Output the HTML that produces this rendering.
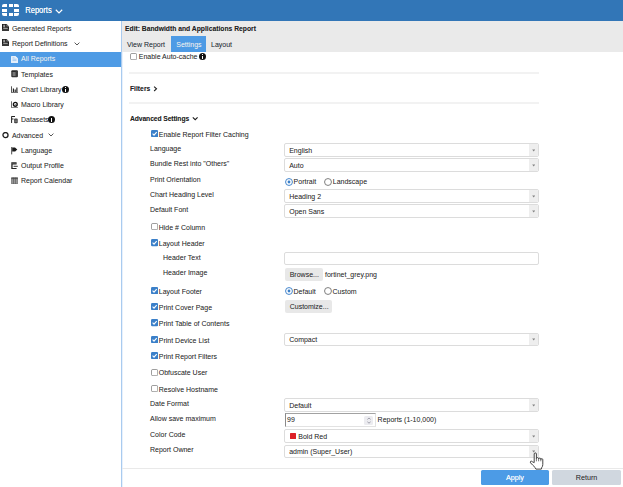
<!DOCTYPE html>
<html><head><meta charset="utf-8"><style>
html,body{margin:0;padding:0;width:623px;height:487px;overflow:hidden;background:#fff}
body{position:relative;font-family:"Liberation Sans",sans-serif}
.t{position:absolute;white-space:nowrap;line-height:10px;text-shadow:0 0 0.35px rgba(0,0,0,0.22)}
.b{position:absolute;box-sizing:border-box}
</style></head><body>
<div class="b" style="left:0px;top:0px;width:623px;height:21px;background:#3276b7"></div>
<div class="b" style="left:2.3px;top:3.9px;width:4.7px;height:3.1px;background:#fff;border-top-left-radius:2px"></div>
<div class="b" style="left:8.6px;top:3.9px;width:4.1px;height:3.1px;background:#fff;"></div>
<div class="b" style="left:14px;top:3.9px;width:5.1px;height:3.1px;background:#fff;border-top-right-radius:2px"></div>
<div class="b" style="left:2.3px;top:8.6px;width:4.7px;height:3.3px;background:#fff;"></div>
<div class="b" style="left:14px;top:8.6px;width:5.1px;height:3.3px;background:#fff;"></div>
<div class="b" style="left:2.3px;top:13.15px;width:4.7px;height:3.25px;background:#fff;border-bottom-left-radius:2px"></div>
<div class="b" style="left:8.6px;top:13.15px;width:4.1px;height:3.25px;background:#fff;"></div>
<div class="b" style="left:14px;top:13.15px;width:5.1px;height:3.25px;background:#fff;border-bottom-right-radius:2px"></div>
<div class="t" style="left:25.2px;top:5.67px;font-size:7.6px;font-weight:400;color:#fff;transform-origin:0 7.63px;transform:scaleY(1.1);text-shadow:0 0 0.4px rgba(255,255,255,0.8)">Reports</div>
<svg class="b" style="left:54.5px;top:8.5px" width="8" height="5" viewBox="0 0 8 5"><path d="M0.8 0.8 L4 3.9 L7.2 0.8" fill="none" stroke="#fff" stroke-width="1.2"/></svg>
<div class="b" style="left:121px;top:21px;width:1px;height:466px;background:#a9cbef"></div>
<div class="b" style="left:122px;top:52px;width:1px;height:435px;background:#e8f1fc"></div>
<div class="b" style="left:0px;top:51.5px;width:121px;height:15px;background:#4e9be5"></div>
<div class="t" style="left:11.9px;top:24.07px;font-size:7.0px;font-weight:400;color:#333;transform-origin:0 7.43px;transform:scaleY(1.1);">Generated Reports</div>
<svg class="b" style="left:2px;top:24.30px" width="7" height="7.2" viewBox="0 0 7 7.2"><path d="M0 0 H4.6 L7 2.4 V7.2 H0 Z" fill="#1e1e1e"/><path d="M4.4 0.2 V2.6 H6.8" fill="#888"/><path d="M1.2 1.3 H3.2 M1.2 2.7 H3.2 M1.2 4.3 H5.8" stroke="#fff" stroke-width="0.7"/><path d="M0 6 H7" stroke="#555" stroke-width="1"/></svg>
<div class="t" style="left:11.9px;top:39.07px;font-size:7.0px;font-weight:400;color:#333;transform-origin:0 7.43px;transform:scaleY(1.1);">Report Definitions</div>
<svg class="b" style="left:2px;top:39.30px" width="7" height="7.2" viewBox="0 0 7 7.2"><path d="M0 0 H4.6 L7 2.4 V7.2 H0 Z" fill="#1e1e1e"/><path d="M4.4 0.2 V2.6 H6.8" fill="#888"/><path d="M1.2 1.3 H3.2 M1.2 2.7 H3.2 M1.2 4.3 H5.8" stroke="#fff" stroke-width="0.7"/><path d="M0 6 H7" stroke="#555" stroke-width="1"/></svg>
<div class="t" style="left:21px;top:54.07px;font-size:7.0px;font-weight:400;color:#fff;transform-origin:0 7.43px;transform:scaleY(1.1);">All Reports</div>
<svg class="b" style="left:11px;top:55.80px" width="7.2" height="7.2" viewBox="0 0 7.2 7.2"><path d="M0.4 0.4 H4.6 L6.8 2.6 V6.8 H0.4 Z" fill="#e8f1fb" stroke="#fff" stroke-width="0.8"/><path d="M1.5 1.8 H3.5 M1.5 3.2 H5.5 M1.5 4.6 H5.5" stroke="#7fb3e8" stroke-width="0.6"/></svg>
<div class="t" style="left:21px;top:69.57px;font-size:7.0px;font-weight:400;color:#333;transform-origin:0 7.43px;transform:scaleY(1.1);">Templates</div>
<svg class="b" style="left:11px;top:70.30px" width="7.2" height="7.6" viewBox="0 0 7.2 7.6"><rect x="0.3" y="0.3" width="6.6" height="7" rx="1" fill="#2a2a2a"/><rect x="1.5" y="2" width="3.2" height="4.2" fill="#777"/><path d="M5.2 0.6 V6.8" stroke="#555" stroke-width="0.6"/></svg>
<div class="t" style="left:21px;top:84.57px;font-size:7.0px;font-weight:400;color:#333;transform-origin:0 7.43px;transform:scaleY(1.1);">Chart Library</div>
<svg class="b" style="left:10.8px;top:85.70px" width="7.6" height="7.2" viewBox="0 0 7.6 7.2"><path d="M0.5 0.3 V6.7 H7.4" fill="none" stroke="#444" stroke-width="0.9"/><path d="M2.4 2.4 V5.9 M4.2 3.4 V5.9 M5.9 1.6 V5.9" stroke="#1e1e1e" stroke-width="1.15"/></svg>
<div class="t" style="left:21px;top:100.07px;font-size:7.0px;font-weight:400;color:#333;transform-origin:0 7.43px;transform:scaleY(1.1);">Macro Library</div>
<svg class="b" style="left:10.8px;top:100.80px" width="7.6" height="7.2" viewBox="0 0 7.6 7.2"><path d="M0.5 0.3 V6.7 H7" fill="none" stroke="#444" stroke-width="0.8"/><circle cx="4.3" cy="3.3" r="1.9" fill="none" stroke="#111" stroke-width="1.4"/><circle cx="4.3" cy="3.3" r="0.5" fill="#444"/></svg>
<div class="t" style="left:21px;top:115.07px;font-size:7.0px;font-weight:400;color:#333;transform-origin:0 7.43px;transform:scaleY(1.1);">Datasets</div>
<svg class="b" style="left:11px;top:116.20px" width="7.2" height="7.4" viewBox="0 0 7.2 7.4"><path d="M0.6 0.5 H4 M0.6 0.3 V7 M0.6 3 H2.5" stroke="#222" stroke-width="1"/><rect x="3" y="2.6" width="3.8" height="4.6" rx="1.2" fill="#444"/><path d="M3.2 4.2 H6.6 M3.2 5.6 H6.6" stroke="#aaa" stroke-width="0.5"/></svg>
<div class="t" style="left:11.9px;top:131.07px;font-size:7.0px;font-weight:400;color:#333;transform-origin:0 7.43px;transform:scaleY(1.1);">Advanced</div>
<svg class="b" style="left:2.1px;top:132.30px" width="7.2" height="6.4" viewBox="0 0 7.2 6.4"><circle cx="3.5" cy="3.1" r="2.55" fill="none" stroke="#1e1e1e" stroke-width="1.3"/></svg>
<div class="t" style="left:21px;top:146.07px;font-size:7.0px;font-weight:400;color:#333;transform-origin:0 7.43px;transform:scaleY(1.1);">Language</div>
<svg class="b" style="left:11px;top:147.20px" width="7.2" height="7.6" viewBox="0 0 7.2 7.6"><path d="M0.7 0 V7.4" stroke="#333" stroke-width="0.9"/><path d="M1.2 0.6 H4 L6.3 2.6 L4.2 4.4 H1.2 Z" fill="#1a1a1a"/></svg>
<div class="t" style="left:21px;top:161.07px;font-size:7.0px;font-weight:400;color:#333;transform-origin:0 7.43px;transform:scaleY(1.1);">Output Profile</div>
<svg class="b" style="left:11px;top:162.10px" width="7.2" height="7.4" viewBox="0 0 7.2 7.4"><path d="M0.3 0.3 H5.6 V2.4 H1.6 V6 H5.6 V7.2 H0.3 Z" fill="#222"/><path d="M2.6 4.3 H6.8" stroke="#333" stroke-width="1"/><path d="M0.5 1.3 H5.4" stroke="#888" stroke-width="0.5"/></svg>
<div class="t" style="left:21px;top:176.07px;font-size:7.0px;font-weight:400;color:#333;transform-origin:0 7.43px;transform:scaleY(1.1);">Report Calendar</div>
<svg class="b" style="left:11px;top:177.10px" width="7.2" height="7.4" viewBox="0 0 7.2 7.4"><rect x="0.4" y="0.4" width="6.4" height="6.6" rx="0.6" fill="#9a9a9a" stroke="#555" stroke-width="0.6"/><path d="M2.5 0.6 V7 M4.6 0.6 V7" stroke="#555" stroke-width="0.6"/><path d="M0.4 1.6 H6.8" stroke="#444" stroke-width="0.8"/></svg>
<svg class="b" style="left:74px;top:41.5px" width="6" height="4" viewBox="0 0 6 4"><path d="M0.6 0.6 L3 3 L5.4 0.6" fill="none" stroke="#444" stroke-width="0.9"/></svg>
<svg class="b" style="left:47.5px;top:133px" width="6" height="4" viewBox="0 0 6 4"><path d="M0.6 0.6 L3 3 L5.4 0.6" fill="none" stroke="#444" stroke-width="0.9"/></svg>
<div class="b" style="left:61.5px;top:86.0px;width:7px;height:7px;border-radius:50%;background:#111"></div>
<div class="b" style="left:64.5px;top:87.2px;width:1px;height:1px;background:#fff"></div>
<div class="b" style="left:64.5px;top:88.8px;width:1.1px;height:3px;background:#fff"></div>
<div class="b" style="left:48.3px;top:116.3px;width:7px;height:7px;border-radius:50%;background:#111"></div>
<div class="b" style="left:51.3px;top:117.5px;width:1px;height:1px;background:#fff"></div>
<div class="b" style="left:51.3px;top:119.1px;width:1.1px;height:3px;background:#fff"></div>
<div class="b" style="left:122px;top:21px;width:501px;height:30.75px;background:#eaeaea"></div>
<div class="t" style="left:125px;top:24.16px;font-size:6.75px;font-weight:700;color:#222;transform-origin:0 7.34px;transform:scaleY(1.1);">Edit: Bandwidth and Applications Report</div>
<div class="b" style="left:170.75px;top:36px;width:35px;height:15.75px;background:#4e9be5"></div>
<div class="t" style="left:127px;top:40.07px;font-size:7.0px;font-weight:400;color:#2d3440;transform-origin:0 7.43px;transform:scaleY(1.1);">View Report</div>
<div class="t" style="left:176.25px;top:40.07px;font-size:7.0px;font-weight:400;color:#fff;transform-origin:0 7.43px;transform:scaleY(1.1);">Settings</div>
<div class="t" style="left:211px;top:40.07px;font-size:7.0px;font-weight:400;color:#2d3440;transform-origin:0 7.43px;transform:scaleY(1.1);">Layout</div>
<svg class="b" style="left:130.3px;top:52.8px" width="7.2" height="7.2" viewBox="0 0 7.2 7.2"><rect x="0.45" y="0.45" width="6.3" height="6.3" rx="1.4" fill="#fff" stroke="#858585" stroke-width="0.85"/></svg>
<div class="t" style="left:138.75px;top:52.32px;font-size:7.0px;font-weight:400;color:#333;transform-origin:0 7.43px;transform:scaleY(1.1);">Enable Auto-cache</div>
<div class="b" style="left:198.75px;top:53.2px;width:7px;height:7px;border-radius:50%;background:#111"></div>
<div class="b" style="left:201.75px;top:54.400000000000006px;width:1px;height:1px;background:#fff"></div>
<div class="b" style="left:201.75px;top:56.0px;width:1.1px;height:3px;background:#fff"></div>
<div class="b" style="left:129.2px;top:72px;width:409.8px;height:2px;background:#f2f2f2"></div>
<div class="t" style="left:130px;top:84.16px;font-size:6.75px;font-weight:700;color:#222;transform-origin:0 7.34px;transform:scaleY(1.1);">Filters</div>
<svg class="b" style="left:153px;top:85.5px" width="5" height="6" viewBox="0 0 5 6"><path d="M1.1 0.6 L3.5 2.8 L1.1 5" fill="none" stroke="#222" stroke-width="1.1"/></svg>
<div class="b" style="left:129.2px;top:102px;width:409.8px;height:2px;background:#f2f2f2"></div>
<div class="t" style="left:130px;top:114.16px;font-size:6.75px;font-weight:700;color:#222;transform-origin:0 7.34px;transform:scaleY(1.1);letter-spacing:-0.1px">Advanced Settings</div>
<svg class="b" style="left:191.5px;top:116px" width="7" height="5" viewBox="0 0 7 5"><path d="M0.8 1.4 L3.2 3.7 L5.6 1.4" fill="none" stroke="#1a1a1a" stroke-width="1.1"/></svg>
<svg class="b" style="left:150.55px;top:129.8px" width="7.2" height="7.2" viewBox="0 0 7.2 7.2"><rect x="0" y="0" width="7.2" height="7.2" rx="1.2" fill="#3b80c9"/><path d="M1.6 3.7 L3 5.1 L5.7 2.1" fill="none" stroke="#fff" stroke-width="1.1"/></svg>
<div class="t" style="left:158.75px;top:130.07px;font-size:7.0px;font-weight:400;color:#333;transform-origin:0 7.43px;transform:scaleY(1.1);">Enable Report Filter Caching</div>
<div class="t" style="left:150px;top:144.07px;font-size:7.0px;font-weight:400;color:#333;transform-origin:0 7.43px;transform:scaleY(1.1);">Language</div>
<div class="b" style="left:284px;top:143.3px;width:255px;height:13.5px;background:#fff;border:1px solid #dcdcdc;border-radius:2px"></div>
<div class="b" style="left:529.2px;top:144.3px;width:8.8px;height:11.5px;background:#eeeeee;border-top-right-radius:1.5px;border-bottom-right-radius:1.5px"></div>
<svg class="b" style="left:532px;top:148.75px" width="3.4" height="3" viewBox="0 0 3.4 3"><path d="M0.2 0.6 H3.2 L1.7 2.4 Z" fill="#808080"/></svg>
<div class="t" style="left:289.2px;top:145.87px;font-size:7.0px;font-weight:400;color:#333;transform-origin:0 7.43px;transform:scaleY(1.1);">English</div>
<div class="t" style="left:150px;top:159.07px;font-size:7.0px;font-weight:400;color:#333;transform-origin:0 7.43px;transform:scaleY(1.1);">Bundle Rest into "Others"</div>
<div class="b" style="left:284px;top:158.3px;width:255px;height:13.5px;background:#fff;border:1px solid #dcdcdc;border-radius:2px"></div>
<div class="b" style="left:529.2px;top:159.3px;width:8.8px;height:11.5px;background:#eeeeee;border-top-right-radius:1.5px;border-bottom-right-radius:1.5px"></div>
<svg class="b" style="left:532px;top:163.75px" width="3.4" height="3" viewBox="0 0 3.4 3"><path d="M0.2 0.6 H3.2 L1.7 2.4 Z" fill="#808080"/></svg>
<div class="t" style="left:289.2px;top:160.87px;font-size:7.0px;font-weight:400;color:#333;transform-origin:0 7.43px;transform:scaleY(1.1);">Auto</div>
<div class="t" style="left:150px;top:175.07px;font-size:7.0px;font-weight:400;color:#333;transform-origin:0 7.43px;transform:scaleY(1.1);">Print Orientation</div>
<svg class="b" style="left:284.75px;top:177.75px" width="8" height="8" viewBox="0 0 8 8"><circle cx="4" cy="4" r="3.45" fill="#fff" stroke="#3b80c9" stroke-width="0.95"/><circle cx="4" cy="4" r="1.4" fill="#3b80c9"/></svg>
<div class="t" style="left:293.6px;top:177.07px;font-size:7.0px;font-weight:400;color:#333;transform-origin:0 7.43px;transform:scaleY(1.1);">Portrait</div>
<svg class="b" style="left:324.25px;top:177.75px" width="8" height="8" viewBox="0 0 8 8"><circle cx="4" cy="4" r="3.45" fill="#fff" stroke="#777" stroke-width="0.95"/></svg>
<div class="t" style="left:332.8px;top:177.07px;font-size:7.0px;font-weight:400;color:#333;transform-origin:0 7.43px;transform:scaleY(1.1);">Landscape</div>
<div class="t" style="left:150px;top:190.07px;font-size:7.0px;font-weight:400;color:#333;transform-origin:0 7.43px;transform:scaleY(1.1);">Chart Heading Level</div>
<div class="b" style="left:284px;top:189.3px;width:255px;height:13.5px;background:#fff;border:1px solid #dcdcdc;border-radius:2px"></div>
<div class="b" style="left:529.2px;top:190.3px;width:8.8px;height:11.5px;background:#eeeeee;border-top-right-radius:1.5px;border-bottom-right-radius:1.5px"></div>
<svg class="b" style="left:532px;top:194.75px" width="3.4" height="3" viewBox="0 0 3.4 3"><path d="M0.2 0.6 H3.2 L1.7 2.4 Z" fill="#808080"/></svg>
<div class="t" style="left:289.2px;top:191.87px;font-size:7.0px;font-weight:400;color:#333;transform-origin:0 7.43px;transform:scaleY(1.1);">Heading 2</div>
<div class="t" style="left:150px;top:205.07px;font-size:7.0px;font-weight:400;color:#333;transform-origin:0 7.43px;transform:scaleY(1.1);">Default Font</div>
<div class="b" style="left:284px;top:204.3px;width:255px;height:13.5px;background:#fff;border:1px solid #dcdcdc;border-radius:2px"></div>
<div class="b" style="left:529.2px;top:205.3px;width:8.8px;height:11.5px;background:#eeeeee;border-top-right-radius:1.5px;border-bottom-right-radius:1.5px"></div>
<svg class="b" style="left:532px;top:209.75px" width="3.4" height="3" viewBox="0 0 3.4 3"><path d="M0.2 0.6 H3.2 L1.7 2.4 Z" fill="#808080"/></svg>
<div class="t" style="left:289.2px;top:206.87px;font-size:7.0px;font-weight:400;color:#333;transform-origin:0 7.43px;transform:scaleY(1.1);">Open Sans</div>
<svg class="b" style="left:150.8px;top:223.20000000000002px" width="7.2" height="7.2" viewBox="0 0 7.2 7.2"><rect x="0.45" y="0.45" width="6.3" height="6.3" rx="1.4" fill="#fff" stroke="#858585" stroke-width="0.85"/></svg>
<div class="t" style="left:158.75px;top:223.07px;font-size:7.0px;font-weight:400;color:#333;transform-origin:0 7.43px;transform:scaleY(1.1);">Hide # Column</div>
<svg class="b" style="left:150.8px;top:239.4px" width="7.2" height="7.2" viewBox="0 0 7.2 7.2"><rect x="0" y="0" width="7.2" height="7.2" rx="1.2" fill="#3b80c9"/><path d="M1.6 3.7 L3 5.1 L5.7 2.1" fill="none" stroke="#fff" stroke-width="1.1"/></svg>
<div class="t" style="left:158.75px;top:239.07px;font-size:7.0px;font-weight:400;color:#333;transform-origin:0 7.43px;transform:scaleY(1.1);">Layout Header</div>
<div class="t" style="left:163px;top:253.07px;font-size:7.0px;font-weight:400;color:#333;transform-origin:0 7.43px;transform:scaleY(1.1);">Header Text</div>
<div class="b" style="left:284px;top:252.2px;width:255px;height:13.1px;background:#fff;border:1px solid #dcdcdc;border-radius:2px"></div>
<div class="t" style="left:163px;top:268.07px;font-size:7.0px;font-weight:400;color:#333;transform-origin:0 7.43px;transform:scaleY(1.1);">Header Image</div>
<div class="b" style="left:284.8px;top:268px;width:38.2px;height:12.6px;background:#e8e8e8;border-radius:2px"></div>
<div class="t" style="left:289.7px;top:270.07px;font-size:7.0px;font-weight:400;color:#333;transform-origin:0 7.43px;transform:scaleY(1.1);">Browse...</div>
<div class="t" style="left:325px;top:269.57px;font-size:7.0px;font-weight:400;color:#333;transform-origin:0 7.43px;transform:scaleY(1.1);">fortinet_grey.png</div>
<svg class="b" style="left:150.8px;top:287.0px" width="7.2" height="7.2" viewBox="0 0 7.2 7.2"><rect x="0" y="0" width="7.2" height="7.2" rx="1.2" fill="#3b80c9"/><path d="M1.6 3.7 L3 5.1 L5.7 2.1" fill="none" stroke="#fff" stroke-width="1.1"/></svg>
<div class="t" style="left:158.75px;top:287.07px;font-size:7.0px;font-weight:400;color:#333;transform-origin:0 7.43px;transform:scaleY(1.1);">Layout Footer</div>
<svg class="b" style="left:284.95px;top:287.05px" width="8" height="8" viewBox="0 0 8 8"><circle cx="4" cy="4" r="3.45" fill="#fff" stroke="#3b80c9" stroke-width="0.95"/><circle cx="4" cy="4" r="1.4" fill="#3b80c9"/></svg>
<div class="t" style="left:293.5px;top:287.07px;font-size:7.0px;font-weight:400;color:#333;transform-origin:0 7.43px;transform:scaleY(1.1);">Default</div>
<svg class="b" style="left:324.15px;top:287.05px" width="8" height="8" viewBox="0 0 8 8"><circle cx="4" cy="4" r="3.45" fill="#fff" stroke="#777" stroke-width="0.95"/></svg>
<div class="t" style="left:332.5px;top:287.07px;font-size:7.0px;font-weight:400;color:#333;transform-origin:0 7.43px;transform:scaleY(1.1);">Custom</div>
<svg class="b" style="left:150.8px;top:303.2px" width="7.2" height="7.2" viewBox="0 0 7.2 7.2"><rect x="0" y="0" width="7.2" height="7.2" rx="1.2" fill="#3b80c9"/><path d="M1.6 3.7 L3 5.1 L5.7 2.1" fill="none" stroke="#fff" stroke-width="1.1"/></svg>
<div class="t" style="left:158.75px;top:303.07px;font-size:7.0px;font-weight:400;color:#333;transform-origin:0 7.43px;transform:scaleY(1.1);">Print Cover Page</div>
<div class="b" style="left:284.8px;top:299.8px;width:47.5px;height:13.2px;background:#e8e8e8;border-radius:2px"></div>
<div class="t" style="left:289.7px;top:302.07px;font-size:7.0px;font-weight:400;color:#333;transform-origin:0 7.43px;transform:scaleY(1.1);">Customize...</div>
<svg class="b" style="left:150.8px;top:319.40000000000003px" width="7.2" height="7.2" viewBox="0 0 7.2 7.2"><rect x="0" y="0" width="7.2" height="7.2" rx="1.2" fill="#3b80c9"/><path d="M1.6 3.7 L3 5.1 L5.7 2.1" fill="none" stroke="#fff" stroke-width="1.1"/></svg>
<div class="t" style="left:158.75px;top:319.07px;font-size:7.0px;font-weight:400;color:#333;transform-origin:0 7.43px;transform:scaleY(1.1);">Print Table of Contents</div>
<svg class="b" style="left:150.8px;top:335.7px" width="7.2" height="7.2" viewBox="0 0 7.2 7.2"><rect x="0" y="0" width="7.2" height="7.2" rx="1.2" fill="#3b80c9"/><path d="M1.6 3.7 L3 5.1 L5.7 2.1" fill="none" stroke="#fff" stroke-width="1.1"/></svg>
<div class="t" style="left:158.75px;top:335.57px;font-size:7.0px;font-weight:400;color:#333;transform-origin:0 7.43px;transform:scaleY(1.1);">Print Device List</div>
<div class="b" style="left:284px;top:332.7px;width:255px;height:13.5px;background:#fff;border:1px solid #dcdcdc;border-radius:2px"></div>
<div class="b" style="left:529.2px;top:333.7px;width:8.8px;height:11.5px;background:#eeeeee;border-top-right-radius:1.5px;border-bottom-right-radius:1.5px"></div>
<svg class="b" style="left:532px;top:338.15px" width="3.4" height="3" viewBox="0 0 3.4 3"><path d="M0.2 0.6 H3.2 L1.7 2.4 Z" fill="#808080"/></svg>
<div class="t" style="left:289.2px;top:335.27px;font-size:7.0px;font-weight:400;color:#333;transform-origin:0 7.43px;transform:scaleY(1.1);">Compact</div>
<svg class="b" style="left:150.8px;top:352.0px" width="7.2" height="7.2" viewBox="0 0 7.2 7.2"><rect x="0" y="0" width="7.2" height="7.2" rx="1.2" fill="#3b80c9"/><path d="M1.6 3.7 L3 5.1 L5.7 2.1" fill="none" stroke="#fff" stroke-width="1.1"/></svg>
<div class="t" style="left:158.75px;top:351.82px;font-size:7.0px;font-weight:400;color:#333;transform-origin:0 7.43px;transform:scaleY(1.1);">Print Report Filters</div>
<svg class="b" style="left:150.8px;top:368.7px" width="7.2" height="7.2" viewBox="0 0 7.2 7.2"><rect x="0.45" y="0.45" width="6.3" height="6.3" rx="1.4" fill="#fff" stroke="#858585" stroke-width="0.85"/></svg>
<div class="t" style="left:158.75px;top:368.07px;font-size:7.0px;font-weight:400;color:#333;transform-origin:0 7.43px;transform:scaleY(1.1);">Obfuscate User</div>
<svg class="b" style="left:150.8px;top:385.1px" width="7.2" height="7.2" viewBox="0 0 7.2 7.2"><rect x="0.45" y="0.45" width="6.3" height="6.3" rx="1.4" fill="#fff" stroke="#858585" stroke-width="0.85"/></svg>
<div class="t" style="left:158.75px;top:384.82px;font-size:7.0px;font-weight:400;color:#333;transform-origin:0 7.43px;transform:scaleY(1.1);">Resolve Hostname</div>
<div class="t" style="left:150px;top:399.07px;font-size:7.0px;font-weight:400;color:#333;transform-origin:0 7.43px;transform:scaleY(1.1);">Date Format</div>
<div class="b" style="left:284px;top:398.4px;width:255px;height:13.5px;background:#fff;border:1px solid #dcdcdc;border-radius:2px"></div>
<div class="b" style="left:529.2px;top:399.4px;width:8.8px;height:11.5px;background:#eeeeee;border-top-right-radius:1.5px;border-bottom-right-radius:1.5px"></div>
<svg class="b" style="left:532px;top:403.85px" width="3.4" height="3" viewBox="0 0 3.4 3"><path d="M0.2 0.6 H3.2 L1.7 2.4 Z" fill="#808080"/></svg>
<div class="t" style="left:289.2px;top:400.97px;font-size:7.0px;font-weight:400;color:#333;transform-origin:0 7.43px;transform:scaleY(1.1);">Default</div>
<div class="t" style="left:150px;top:414.07px;font-size:7.0px;font-weight:400;color:#333;transform-origin:0 7.43px;transform:scaleY(1.1);">Allow save maximum</div>
<div class="b" style="left:284.5px;top:413px;width:91px;height:13.6px;background:#fff;border-top:1.7px solid #a2a2a2;border-left:1.5px solid #8a8a8a;border-right:1px solid #e2e2e2;border-bottom:1px solid #e2e2e2"></div>
<div class="t" style="left:287px;top:415.07px;font-size:7.0px;font-weight:400;color:#333;transform-origin:0 7.43px;transform:scaleY(1.1);">99</div>
<div class="b" style="left:364.2px;top:416px;width:8.6px;height:9px;background:#ececf0;border-radius:1.5px"></div>
<svg class="b" style="left:366px;top:415.5px" width="6" height="9" viewBox="0 0 6 9"><path d="M1.4 3.4 L3 2 L4.6 3.4 M1.4 5.8 L3 7.2 L4.6 5.8" fill="none" stroke="#6a6a7a" stroke-width="0.6"/></svg>
<div class="t" style="left:377.6px;top:415.07px;font-size:7.0px;font-weight:400;color:#333;transform-origin:0 7.43px;transform:scaleY(1.1);">Reports (1-10,000)</div>
<div class="t" style="left:150px;top:430.07px;font-size:7.0px;font-weight:400;color:#333;transform-origin:0 7.43px;transform:scaleY(1.1);">Color Code</div>
<div class="b" style="left:284px;top:429.3px;width:255px;height:13.5px;background:#fff;border:1px solid #dcdcdc;border-radius:2px"></div>
<div class="b" style="left:529.2px;top:430.3px;width:8.8px;height:11.5px;background:#eeeeee;border-top-right-radius:1.5px;border-bottom-right-radius:1.5px"></div>
<svg class="b" style="left:532px;top:434.75px" width="3.4" height="3" viewBox="0 0 3.4 3"><path d="M0.2 0.6 H3.2 L1.7 2.4 Z" fill="#808080"/></svg>
<div class="b" style="left:289.8px;top:432.7px;width:6.2px;height:6.2px;background:#dd1f26;border-radius:0.5px"></div>
<div class="t" style="left:298.3px;top:431.87px;font-size:7.0px;font-weight:400;color:#333;transform-origin:0 7.43px;transform:scaleY(1.1);">Bold Red</div>
<div class="t" style="left:150px;top:445.07px;font-size:7.0px;font-weight:400;color:#333;transform-origin:0 7.43px;transform:scaleY(1.1);">Report Owner</div>
<div class="b" style="left:284px;top:444.7px;width:255px;height:13.5px;background:#fff;border:1px solid #dcdcdc;border-radius:2px"></div>
<div class="b" style="left:529.2px;top:445.7px;width:8.8px;height:11.5px;background:#eeeeee;border-top-right-radius:1.5px;border-bottom-right-radius:1.5px"></div>
<svg class="b" style="left:532px;top:450.15px" width="3.4" height="3" viewBox="0 0 3.4 3"><path d="M0.2 0.6 H3.2 L1.7 2.4 Z" fill="#808080"/></svg>
<div class="t" style="left:289.2px;top:447.27px;font-size:7.0px;font-weight:400;color:#333;transform-origin:0 7.43px;transform:scaleY(1.1);">admin (Super_User)</div>
<div class="b" style="left:122px;top:468px;width:501px;height:1px;background:#e9e9e9"></div>
<div class="b" style="left:480.8px;top:470.3px;width:68.6px;height:15.1px;background:#4c9be6;border-radius:1.5px"></div>
<div class="b" style="left:552px;top:470.3px;width:69px;height:15.1px;background:#d0d7df;border-radius:1.5px"></div>
<div class="t" style="left:480.75px;width:68.25px;text-align:center;top:472.51px;font-size:7.2px;color:#fff;text-shadow:0 0 0.4px rgba(255,255,255,0.7)">Apply</div>
<div class="t" style="left:552px;width:69px;text-align:center;top:472.51px;font-size:7.2px;color:#333">Return</div>
<svg class="b" style="left:528px;top:452px" width="17" height="19" viewBox="0 0 17 19"><path d="M6.2 10.6 V2 Q6.2 0.9 7.3 0.9 Q8.4 0.9 8.4 2 V6.6 Q8.4 5.6 9.5 5.6 Q10.6 5.6 10.6 6.6 V7 Q10.6 6.1 11.7 6.1 Q12.8 6.1 12.8 7.1 V7.6 Q12.8 6.7 13.8 6.7 Q14.8 6.7 14.8 7.7 V12.4 Q14.8 14.4 13.6 15.8 L13.3 17.1 H7.9 L7.2 15.6 Q4.6 13.1 2.6 10.9 Q1.8 9.9 2.7 9.3 Q3.6 8.9 4.5 9.8 Z" fill="#fff" stroke="#3a3a3a" stroke-width="0.95" stroke-linejoin="round"/><path d="M8.4 6.6 V9.3 M10.6 7 V9.3 M12.8 7.6 V9.3" stroke="#3a3a3a" stroke-width="0.7"/></svg>
</body></html>
